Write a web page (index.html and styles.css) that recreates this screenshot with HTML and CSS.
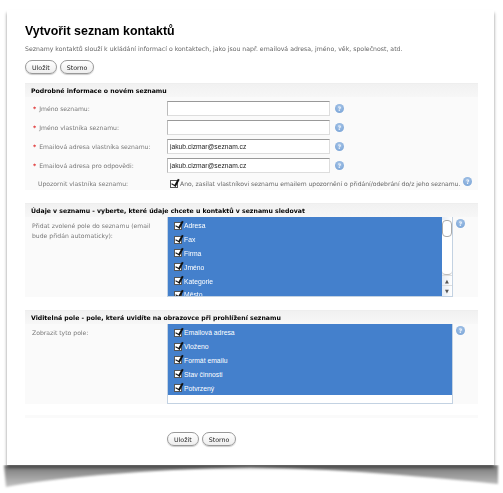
FILE: index.html
```html
<!DOCTYPE html>
<html lang="cs">
<head>
    <meta charset="UTF-8">
    <meta name="viewport" content="width=device-width, initial-scale=1.0">
    <title>Vytvořit seznam kontaktů</title>
    <link rel="stylesheet" href="styles.css">
</head>
<body>
    <!-- stin pod strankou -->
    <svg class="curl" width="503" height="40" viewBox="0 0 503 40" aria-hidden="true">
        <defs>
            <linearGradient id="curl-fill" x1="0" y1="0" x2="0" y2="1">
                <stop offset="0" stop-color="#777"/>
                <stop offset="1" stop-color="#c4c4c4"/>
            </linearGradient>
            <filter id="curl-blur"><feGaussianBlur stdDeviation="1.2"/></filter>
        </defs>
        <path d="M4 0H498V19Q470 16 400 10Q330 4 250 2Q170 4 100 10Q35 16 6 22Z" fill="url(#curl-fill)" filter="url(#curl-blur)"/>
    </svg>

    <div class="sheet">
        <h1>Vytvořit seznam kontaktů</h1>
        <p class="intro">Seznamy kontaktů slouží k ukládání informací o kontaktech, jako jsou např. emailová adresa, jméno, věk, společnost, atd.</p>
        <div class="actions">
            <button class="btn">Uložit</button>
            <button class="btn">Storno</button>
        </div>

        <!-- zakladni udaje -->
        <section class="panel panel-info">
            <h2>Podrobné informace o novém seznamu</h2>
            <div class="row">
                <label class="req">Jméno seznamu:</label>
                <input class="field" type="text">
                <span class="help">?</span>
            </div>
            <div class="row">
                <label class="req">Jméno vlastníka seznamu:</label>
                <input class="field" type="text">
                <span class="help">?</span>
            </div>
            <div class="row">
                <label class="req">Emailová adresa vlastníka seznamu:</label>
                <input class="field" type="text" value="jakub.cizmar@seznam.cz">
                <span class="help">?</span>
            </div>
            <div class="row">
                <label class="req">Emailová adresa pro odpovědi:</label>
                <input class="field" type="text" value="jakub.cizmar@seznam.cz">
                <span class="help">?</span>
            </div>
            <div class="row row-notify">
                <label class="indent">Upozornit vlastníka seznamu:</label>
                <input class="check" type="checkbox" checked>
                <span class="notify-text">Ano, zasílat vlastníkovi seznamu emailem upozornění o přidání/odebrání do/z jeho seznamu.</span>
                <span class="help help-up">?</span>
            </div>
        </section>

        <!-- pole v seznamu -->
        <section class="panel panel-fields">
            <h2>Údaje v seznamu - vyberte, které údaje chcete u kontaktů v seznamu sledovat</h2>
            <div class="row-list">
                <label class="list-label">Přidat zvolené pole do seznamu (email bude přidán automaticky):</label>
                <div class="list list-scroll">
                    <div class="options">
                        <div class="option"><input class="check" type="checkbox" checked>Adresa</div>
                        <div class="option"><input class="check" type="checkbox" checked>Fax</div>
                        <div class="option"><input class="check" type="checkbox" checked>Firma</div>
                        <div class="option"><input class="check" type="checkbox" checked>Jméno</div>
                        <div class="option"><input class="check" type="checkbox" checked>Kategorie</div>
                        <div class="option"><input class="check" type="checkbox" checked>Město</div>
                    </div>
                    <div class="scrollbar">
                        <div class="track"><div class="thumb"></div></div>
                        <div class="arrow">▲</div>
                        <div class="arrow">▼</div>
                    </div>
                </div>
                <span class="help">?</span>
            </div>
        </section>

        <!-- viditelna pole -->
        <section class="panel panel-visible">
            <h2>Viditelná pole - pole, která uvidíte na obrazovce při prohlížení seznamu</h2>
            <div class="row-list">
                <label class="list-label">Zobrazit tyto pole:</label>
                <div class="list">
                    <div class="options">
                        <div class="option"><input class="check" type="checkbox" checked>Emailová adresa</div>
                        <div class="option"><input class="check" type="checkbox" checked>Vloženo</div>
                        <div class="option"><input class="check" type="checkbox" checked>Formát emailu</div>
                        <div class="option"><input class="check" type="checkbox" checked>Stav činnosti</div>
                        <div class="option"><input class="check" type="checkbox" checked>Potvrzený</div>
                    </div>
                </div>
                <span class="help">?</span>
            </div>
        </section>

        <div class="rule"></div>
        <div class="actions actions-bottom">
            <button class="btn">Uložit</button>
            <button class="btn">Storno</button>
        </div>
    </div>
</body>
</html>
```

FILE: styles.css
```css
* {
    margin: 0;
    padding: 0;
    box-sizing: border-box;
}

html, body {
    height: 493px;
    overflow: hidden;
    background: #fff;
}

body {
    padding: 10px 9px 0 7px;
    font-family: "DejaVu Sans", Verdana, sans-serif;
    font-size: 6.1px;
    color: #777;
    position: relative;
}

/* stin pod strankou */
.curl {
    position: absolute;
    left: 0;
    top: 465px;
}

.sheet {
    position: relative;
    height: 455px;
    padding: 14px 16px 0 18px;
    background: #fff;
    box-shadow: 0 3px 3px rgba(0, 0, 0, 0.45);
    filter: blur(0.35px);
}

h1 {
    font-family: "Liberation Sans", Arial, sans-serif;
    font-size: 12.4px;
    line-height: 14px;
    color: #000;
}

.intro {
    margin-top: 6px;
    font-size: 6.2px;
    line-height: 10px;
    color: #666;
    white-space: nowrap;
}

.actions {
    display: flex;
    gap: 3px;
    margin-top: 6px;
}

.actions-bottom {
    margin: 14px 0 0 142px;
}

.btn {
    height: 14px;
    padding: 0 6px;
    border: 1px solid #999;
    border-radius: 7px;
    background: linear-gradient(#fff, #eee);
    box-shadow: 0 1px 1px rgba(0, 0, 0, 0.2);
    font-family: inherit;
    font-size: 6.3px;
    color: #222;
}

/* panely */
.panel {
    margin-top: 9px;
    background: #fafafa;
}

.panel + .panel {
    margin-top: 13px;
}

.panel-info {
    height: 107px;
}

.panel-fields,
.panel-visible {
    height: 94px;
}

h2 {
    height: 14px;
    padding-left: 6px;
    background: linear-gradient(#f1f1f1, #f7f7f7);
    border-top: 1px solid #eee;
    font-size: 6.2px;
    line-height: 13px;
    color: #000;
    white-space: nowrap;
}

.row {
    display: flex;
    align-items: center;
    height: 15px;
    margin-top: 4px;
}

.row label {
    width: 142px;
    flex: none;
    padding-left: 8px;
    white-space: nowrap;
}

.req::before {
    content: "*";
    margin-right: 3px;
    color: #d22;
    font-weight: bold;
}

.row .indent {
    padding-left: 13px;
}

.field {
    width: 163px;
    height: 15px;
    padding-left: 2px;
    border: 1px solid #ddd;
    border-top-color: #999;
    border-left-color: #bbb;
    background: #fff;
    font-family: "Liberation Sans", Arial, sans-serif;
    font-size: 6.7px;
    color: #222;
}

.help {
    flex: none;
    width: 9px;
    height: 9px;
    margin-left: 5px;
    border-radius: 50%;
    background: radial-gradient(circle at 50% 35%, #a9c6e8, #6f9dd4);
    color: #eef4fb;
    font-size: 6px;
    font-weight: bold;
    line-height: 9px;
    text-align: center;
}

.help-up {
    margin: -5px 0 0 3px;
}

.row-notify {
    margin-top: 3px;
}

.notify-text {
    margin-left: 2px;
    font-size: 6.05px;
    white-space: nowrap;
    color: #666;
}

.check {
    flex: none;
    appearance: none;
    position: relative;
    width: 8px;
    height: 8px;
    margin-left: 3px;
    border: 1px solid #555;
    background: #fff;
}

.check::after {
    content: "";
    position: absolute;
    left: 2px;
    top: -3px;
    width: 3px;
    height: 7px;
    border-right: 2px solid #111;
    border-bottom: 1px solid #111;
    transform: rotate(30deg);
}

/* seznamy se zaskrtavaci polickem */
.row-list {
    display: flex;
    align-items: flex-start;
}

.list-label {
    width: 142px;
    flex: none;
    padding: 4px 8px 0 7px;
    line-height: 10px;
}

.list {
    display: flex;
    flex: none;
    width: 286px;
    height: 80px;
    border: 1px solid #c3d2e2;
    border-top: 0;
    background: #fff;
    overflow: hidden;
}

.options {
    flex: 1;
    height: 71px;
    padding: 2px 0 0 6px;
    background: #4480cc;
    color: #fff;
    font-family: "Liberation Sans", Arial, sans-serif;
    font-size: 6.8px;
}

.list-scroll .options {
    height: 80px;
}

.option {
    display: flex;
    align-items: center;
    gap: 2px;
    height: 13.8px;
    white-space: nowrap;
}

.option .check {
    margin-left: 0;
}

.row-list .help {
    margin: 2px 0 0 3px;
}

.scrollbar {
    flex: none;
    width: 10px;
    display: flex;
    flex-direction: column;
    background: linear-gradient(90deg, #e6ecf3, #fff);
    padding-top: 3px;
}

.track {
    height: 55px;
    border-bottom: 1px solid #bbb;
    border-radius: 0 0 4px 4px;
    background: #fff;
}

.thumb {
    height: 17px;
    border: 1px solid #aaa;
    border-radius: 4px;
    background: #fff;
}

.arrow {
    height: 10px;
    font-size: 5px;
    line-height: 10px;
    text-align: center;
    color: #555;
    border-top: 1px solid #ddd;
}

.rule {
    height: 3px;
    margin-top: 11px;
    background: #fafafa;
}
```
